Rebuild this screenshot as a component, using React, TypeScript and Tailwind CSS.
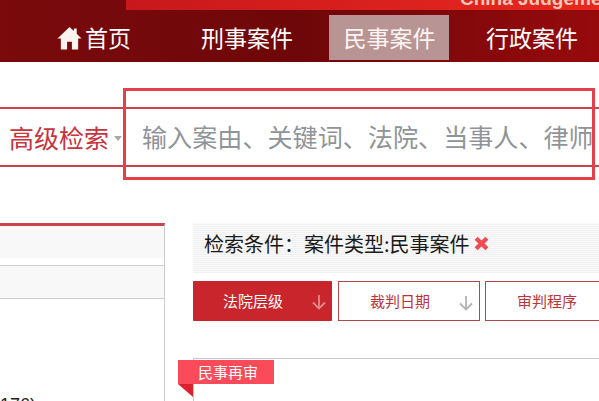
import React from "react";

function ArrowDown({ className }: { className: string }) {
  return (
    <svg viewBox="0 0 14 16" className={className} fill="none" stroke="currentColor" strokeWidth="1.8">
      <path d="M7 1v13.5M1 8.5l6 6 6-6" />
    </svg>
  );
}

function Tab({ label, active, w, arrow = true }: { label: string; active?: boolean; w: string; arrow?: boolean }) {
  return (
    <div
      className={
        active
          ? `relative h-10 shrink-0 flex items-center bg-[#c9252c] text-white text-[15px] rounded-[1px] ${w}`
          : `relative h-10 shrink-0 flex items-center bg-white border border-[#b5474b] text-[#b8343a] text-[15px] ${w}`
      }
    >
      <span className={active ? "pl-[30px]" : "pl-[31px]"}>{label}</span>
      {arrow && (
        <ArrowDown
          className={
            active
              ? "absolute left-[119px] top-[13px] w-[14px] h-[16px] text-[#e08a8c]"
              : "absolute left-[120px] top-[13px] w-[14px] h-[16px] text-[#b3b3b3]"
          }
        />
      )}
    </div>
  );
}

export default function App() {
  return (
    <div
      className="relative w-[599px] h-[401px] overflow-hidden bg-white"
      style={{ fontFamily: '"Noto Sans CJK SC", "Liberation Sans", sans-serif' }}
    >
      {/* Header */}
      <header className="h-[62px] bg-gradient-to-r from-[#7a0a0c] via-[#6e0709] to-[#960a0c] flex flex-col">
        <div className="h-[11px] flex justify-end">
          <div className="relative w-[473px] h-[10px] bg-gradient-to-r from-[#c8181c] to-[#e8281e] overflow-hidden">
            <span
              className="absolute left-[334px] top-[-11px] text-[19px] font-bold leading-[20px] whitespace-nowrap text-[#f6c9b8]"
              style={{ fontFamily: '"Liberation Sans", sans-serif' }}
            >
              China Judgements
            </span>
          </div>
        </div>
        <nav className="flex h-[49px] items-center pt-[4px] text-white text-[23px] leading-none">
          <div className="flex items-center ml-[57px] w-[144px]">
            <svg viewBox="0 0 26 24" className="w-[25px] h-[24px] text-[#fdf4f0]" fill="currentColor">
              <path d="M13 0.5L0.5 12.5h3.5V24h6.5v-8h5v8H22V12.5h3.5L20.5 7.6V2h-3v2.7z" />
            </svg>
            <span className="ml-[3px]">首页</span>
          </div>
          <div className="w-[128px]">刑事案件</div>
          <div className="flex items-center justify-center w-[120px] h-[45px] pl-[1px] bg-[#b99494] text-[#fdf5f2]">民事案件</div>
          <div className="pl-[37px] whitespace-nowrap">行政案件</div>
        </nav>
      </header>

      {/* Search */}
      <section className="mt-[45px] h-[60px] border-y-2 border-[#c8444d] flex items-center bg-white">
        <span className="ml-[9px] text-[25px] leading-none text-[#c5343f]">高级检索</span>
        <span className="ml-[5px] mt-[2px] w-0 h-0 border-x-[4px] border-x-transparent border-t-[5px] border-t-[#a9a9a9]" />
        <span className="ml-[20px] text-[25.1px] leading-none text-[#8f9498] whitespace-nowrap">
          输入案由、关键词、法院、当事人、律师
        </span>
      </section>
      <div className="absolute left-[123px] top-[88px] w-[472px] h-[92px] border-[3px] border-[#e5404a]" />

      {/* Content */}
      <main className="mt-[56px] flex items-start">
        <aside className="w-[165px] h-[178px] shrink-0 border-t-[3px] border-r border-t-[#c8444d] border-r-[#cccccc] relative">
          <div className="h-[32px] bg-[#f8f8f8]" />
          <div className="h-[7px]" />
          <div className="h-[34px] bg-[#f8f8f8] border-y border-[#cfcfcf]" />
          <div
            className="absolute left-[0px] top-[170px] text-[18px] leading-none text-[#222]"
            style={{ fontFamily: '"Liberation Sans", sans-serif' }}
          >
            176)
          </div>
        </aside>

        <div className="ml-[28px] flex-1 min-w-0">
          <div
            className="h-[50px] flex items-center pl-[11px] pb-[9px] text-[20px] leading-none text-[#1a1a1a] bg-[#f7f7f7] whitespace-nowrap"
            style={{
              backgroundImage:
                "repeating-linear-gradient(0deg, #f0f0f0 0 1px, #fafafa 1px 2px)",
            }}
          >
            <span>检索条件：</span>
            <span>案件类型:民事案件</span>
            <svg viewBox="0 0 14 14" className="ml-[4px] w-[15px] h-[15px] text-[#ee4b55]" stroke="currentColor" strokeWidth="4" fill="none">
              <path d="M2 2l10 10M12 2L2 12" />
            </svg>
          </div>

          <div className="mt-[8px] flex w-[500px]">
            <Tab label="法院层级" active w="w-[139px]" />
            <div className="w-[6px] shrink-0" />
            <Tab label="裁判日期" w="w-[142px]" />
            <div className="w-[5px] shrink-0" />
            <Tab label="审判程序" w="w-[142px]" arrow={false} />
          </div>

          <div className="mt-[37px] border-t border-l border-[#c8c8c8] h-[60px] relative">
            <div className="absolute left-[-16px] top-[1px] w-[96px] h-[24px] bg-[#fb4a5a] text-white text-[15px] leading-[24px] pl-[20px]">
              民事再审
            </div>
            <div className="absolute left-[-16px] top-[25px] w-0 h-0 border-t-[13px] border-t-[#d9222c] border-l-[15px] border-l-transparent" />
          </div>
        </div>
      </main>
    </div>
  );
}
